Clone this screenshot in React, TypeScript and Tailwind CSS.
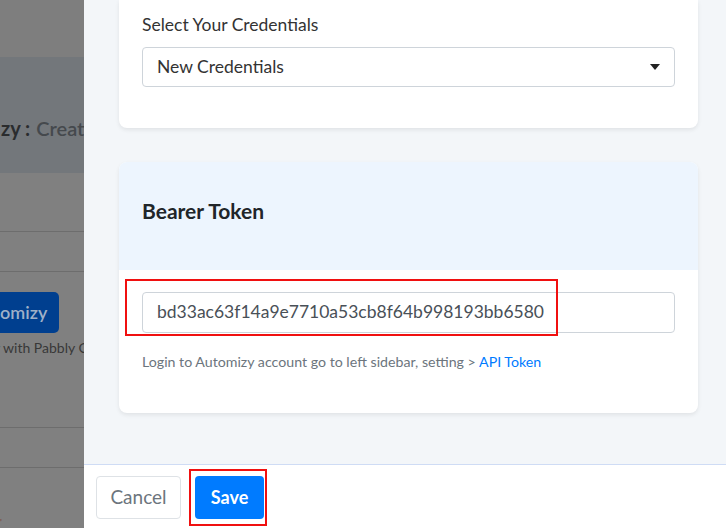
import React from 'react';

const font = { fontFamily: 'Lato, "Open Sans", Arial, sans-serif' };

function Backdrop() {
  return (
    <div className="w-[84px] shrink-0 h-full flex flex-col overflow-hidden bg-[#808080] text-[#2e2e2e]">
      <div className="h-[57px] shrink-0 bg-[#7e7e7e]" />
      <div className="h-[116px] shrink-0 bg-[#73777b] flex items-center pt-[26px] whitespace-nowrap text-[20px]">
        <span className="font-bold text-[#2a2c2e] ml-[1px]">zy :</span>
        <span className="ml-[6px] text-[#45494d] font-semibold">Creating</span>
      </div>
      <div className="h-[59px] shrink-0 border-b border-[#6d6d6d]" />
      <div className="h-[40px] shrink-0 border-b border-[#6d6d6d]" />
      <div className="pt-[20px] shrink-0">
        <div className="w-[59px] h-[41px] rounded-r-[5px] bg-[#003f8f] text-[#9fb0c8] text-[18px] font-semibold flex items-center whitespace-nowrap">
          omizy
        </div>
        <div className="mt-[4px] text-[14px] text-[#383838] whitespace-nowrap -ml-[5px]">r with Pabbly Connect</div>
      </div>
      <div className="h-[70px] shrink-0 border-b border-[#6d6d6d]" />
      <div className="h-[40px] shrink-0 border-b border-[#6d6d6d]" />
      <div className="flex-1 flex items-end pb-[2px]">
        <span className="text-[8px] text-[#7a2a2a] leading-none">ʼ</span>
      </div>
    </div>
  );
}

function Caret() {
  return (
    <svg width="10" height="6" viewBox="0 0 10 6">
      <path d="M0 0 L10 0 L5 6 Z" fill="#222" />
    </svg>
  );
}

export default function App() {
  return (
    <div className="w-[726px] h-[528px] flex overflow-hidden" style={font}>
      <Backdrop />
      <div className="flex-1 h-full flex flex-col bg-[#f3f6f9]">
        <div className="flex-1 pl-[35px] pr-[28px] flex flex-col gap-[34px]">
          {/* credentials card, scrolled so only the bottom shows */}
          <div className="bg-white rounded-b-lg shadow-[0_2px_4px_rgba(0,0,0,0.08)] px-[23px] pt-[14px] pb-[41px]">
            <div className="text-[17.5px] text-[#333] leading-[22px] mb-[11px]">Select Your Credentials</div>
            <div className="h-[40px] border border-[#ced4da] rounded-[4px] flex items-center justify-between pl-[14px] pr-[14px] text-[17.5px] text-[#333]">
              <span>New Credentials</span>
              <Caret />
            </div>
          </div>

          {/* bearer token card */}
          <div className="bg-white rounded-lg shadow-[0_2px_4px_rgba(0,0,0,0.08)]">
            <div className="h-[108px] bg-[#edf5fe] rounded-t-lg flex items-center px-[23px] pb-[10px]">
              <span className="text-[21px] font-bold text-[#212529]">Bearer Token</span>
            </div>
            <div className="px-[23px] pt-[22px] pb-[41px]">
              <div className="relative">
                <div className="h-[41px] border border-[#ced4da] rounded-[4px] flex items-center pl-[14px] text-[17.5px] text-[#495057]">
                  bd33ac63f14a9e7710a53cb8f64b998193bb6580
                </div>
                <div className="absolute -left-[17px] -top-[13px] w-[433px] h-[57px] border-2 border-[#f01010]" />
              </div>
              <div className="mt-[18px] text-[14.2px] text-[#6c757d]">
                Login to Automizy account go to left sidebar, setting &gt;{' '}
                <span className="text-[#007bff]">API Token</span>
              </div>
            </div>
          </div>
        </div>

        {/* footer */}
        <div className="h-[64px] shrink-0 bg-white border-t border-[#cfdcf5] flex items-center gap-[14px] pl-[12px] pt-[1px]">
          <button className="h-[43px] w-[85px] rounded-[4px] border border-[#dee2e6] text-[19px] text-[#6c757d] bg-white">
            Cancel
          </button>
          <div className="relative">
            <button className="h-[43px] w-[69px] rounded-[4px] bg-[#007bff] text-white text-[18px] font-bold">
              Save
            </button>
            <div className="absolute -left-[6px] -top-[7px] w-[78px] h-[57px] border-2 border-[#f01010]" />
          </div>
        </div>
      </div>
    </div>
  );
}
